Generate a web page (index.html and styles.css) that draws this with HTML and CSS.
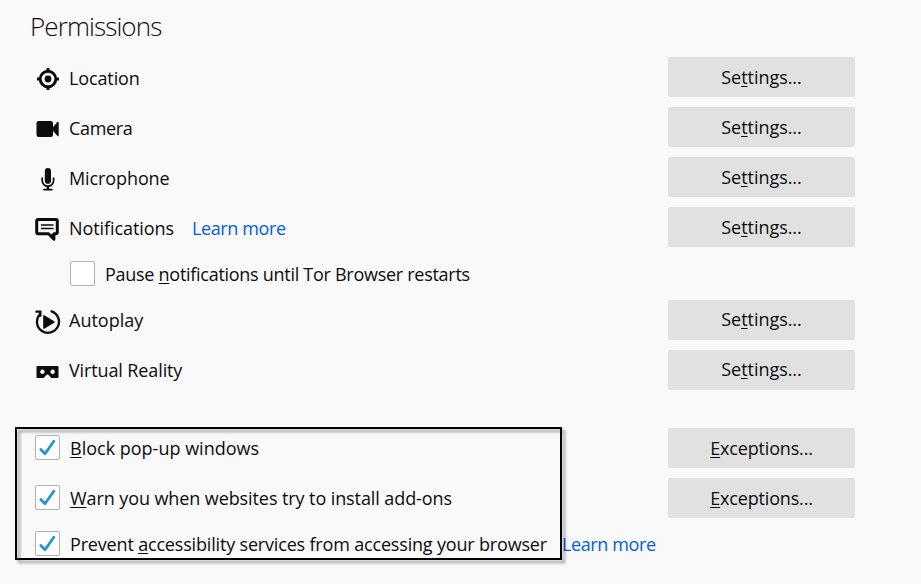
FILE: index.html
```html
<!DOCTYPE html>
<html lang="en">
<head>
<meta charset="utf-8">
<title>Permissions</title>
<link rel="stylesheet" href="styles.css">
</head>
<body>
<main class="permissions">
  <h1 class="title">Permissions</h1>

  <div class="row">
    <svg class="icon" viewBox="0 0 26 26"><g fill="none" stroke="#0c0c0d"><circle cx="13" cy="13" r="7.8" stroke-width="2.9"/><path d="M13 2v4M13 20v4M2 13h4M20 13h4" stroke-width="3"/></g><circle cx="13" cy="13" r="3.4"/></svg>
    <span class="label w-location">Location</span>
    <button class="button">Se<u>t</u>tings...</button>
  </div>
  <div class="row">
    <svg class="icon" viewBox="0 0 26 26"><rect x="1.5" y="5" width="16.5" height="16" rx="2.2"/><path d="M17 12.2 22.3 6.2Q23.7 5 23.7 7v12q0 2-1.4.8L17 13.8z"/></svg>
    <span class="label w-camera">Camera</span>
    <button class="button">Se<u>t</u>tings...</button>
  </div>
  <div class="row">
    <svg class="icon" viewBox="0 0 26 26"><rect x="9.8" y="2" width="6.2" height="15.8" rx="3.1"/><g fill="none" stroke="#0c0c0d" stroke-width="1.7"><path d="M7.2 11.5v3a5.7 5.7 0 0 0 11.4 0v-3M8.3 23.6h9.2"/><path d="M12.9 20v3" stroke-width="2.4"/></g></svg>
    <span class="label w-microphone">Microphone</span>
    <button class="button">Se<u>t</u>tings...</button>
  </div>
  <div class="row">
    <svg class="icon" viewBox="0 0 26 26"><path d="M4 3.4h17.4q1.6 0 1.6 1.6v11q0 1.8-1.6 1.8h-1.8v5.4l-5.3-5.4H4q-1.6 0-1.6-1.8V5Q2.4 3.4 4 3.4z" transform="translate(-.7)" fill="none" stroke="#0c0c0d" stroke-width="3" stroke-linejoin="round"/><path d="M16 18h3.5v6.2z"/><path d="M6.5 9h11.5M6.5 12.5h11.5" stroke="#0c0c0d" stroke-width="1.5" stroke-linecap="round"/></svg>
    <span class="label w-notifications">Notifications</span>
    <a class="link">Learn more</a>
    <button class="button">Se<u>t</u>tings...</button>
  </div>
  <div class="row row-slim row-indent row-raised">
    <span class="checkbox"></span>
    <span class="label w-pause">Pause <u>n</u>otifications until Tor Browser restarts</span>
  </div>
  <div class="row row-raised">
    <svg class="icon" viewBox="0 0 26 26"><g fill="none" stroke="#0c0c0d" stroke-width="2.3"><path d="M16.6 2.4A11 11 0 1 1 5 5.2" stroke-linecap="round"/><path d="M.5 2.6h4.8v5.2"/></g><path d="M8.2 7.2q0-1.7 1.5-.8l9.5 5.8q1.4.8 0 1.6l-9.5 5.8q-1.5.9-1.5-.8z"/></svg>
    <span class="label w-autoplay">Autoplay</span>
    <button class="button">Se<u>t</u>tings...</button>
  </div>
  <div class="row row-raised">
    <svg class="icon" viewBox="0 0 26 26"><path fill-rule="evenodd" d="M2.5 7h20q1 0 1 1v10q0 1-1 1h-6.4l-2.2-2.8q-1.4-1.6-2.8 0L8.9 19H2.5q-1 0-1-1V8q0-1 1-1zM7.4 10.6a2.2 2.2 0 1 0 .01 0zM17.6 10.6a2.2 2.2 0 1 0 .01 0z"/></svg>
    <span class="label w-vr">Virtual Reality</span>
    <button class="button">Se<u>t</u>tings...</button>
  </div>

  <section class="options">
    <div class="row row-option">
      <span class="checkbox"><svg viewBox="0 0 25 25"><path d="M5.8 14.5 10 18.8 18.8 6.2"/></svg></span>
      <span class="label w-block"><u>B</u>lock pop-up windows</span>
      <button class="button w-exceptions"><u>E</u>xceptions...</button>
    </div>
    <div class="row row-option">
      <span class="checkbox"><svg viewBox="0 0 25 25"><path d="M5.8 14.5 10 18.8 18.8 6.2"/></svg></span>
      <span class="label w-warn"><u>W</u>arn you when websites try to install add-ons</span>
      <button class="button w-exceptions"><u>E</u>xceptions...</button>
    </div>
    <div class="row row-slim row-option">
      <span class="checkbox"><svg viewBox="0 0 25 25"><path d="M5.8 14.5 10 18.8 18.8 6.2"/></svg></span>
      <span class="label w-prevent">Prevent <u>a</u>ccessibility services from accessing your browser</span>
      <a class="link link-last">Learn more</a>
    </div>
    <div class="highlight"></div>
  </section>
</main>
</body>
</html>
```
FILE: styles.css
```css
* { box-sizing: border-box; }

body {
  margin: 0;
  height: 584px;
  overflow: hidden;
  background: #f9f9fa;
  color: #0c0c0d;
  font: 18px/26px "Open Sans", "Noto Sans", sans-serif;
}

.permissions {
  width: 855px;
  padding: 7px 0 0 30px;
}

.title {
  margin: 0 0 12px;
  font-size: 26px;
  line-height: 38px;
  font-weight: 300;
  letter-spacing: -0.9px;
}

.row {
  display: flex;
  align-items: center;
  height: 40px;
  margin-bottom: 10px;
  padding-left: 4px;
  white-space: nowrap;
}

.row-slim { height: 33px; }
.row-indent { padding-left: 40px; }
.row-option { padding-left: 5px; }

.icon {
  flex: none;
  width: 26px;
  height: 26px;
  margin: 4px 8px 0 1px;
  fill: #0c0c0d;
}

.label { padding-top: 2px; }
.row-raised .label,
.row-option .label { padding-top: 0; }

.w-location { letter-spacing: -0.12px; }
.w-camera { letter-spacing: -0.35px; }
.w-microphone { letter-spacing: -0.1px; }
.w-notifications { letter-spacing: -0.08px; }
.w-pause { letter-spacing: -0.28px; }
.w-vr { letter-spacing: -0.12px; }
.w-warn { letter-spacing: -0.09px; }
.w-prevent { letter-spacing: -0.175px; }

.link {
  margin-left: 18px;
  padding-top: 2px;
  color: #0060df;
  letter-spacing: -0.38px;
}
.link-last { margin-left: 15px; }
.row-slim .label,
.row-slim .link { padding-top: 0; }
.row-option.row-slim .label,
.row-option.row-slim .link { padding-bottom: 1px; }

u {
  text-decoration-thickness: 1px;
  text-underline-offset: 2px;
  text-decoration-skip-ink: none;
}

.button {
  width: 187px;
  height: 40px;
  margin-left: auto;
  padding: 0;
  border: 0;
  border-radius: 2px;
  background: #e1e1e1;
  color: inherit;
  font: inherit;
  letter-spacing: -0.05px;
}
.row-raised .button { padding-bottom: 2px; }
.button.w-exceptions { letter-spacing: -0.17px; }

.checkbox {
  flex: none;
  width: 25px;
  height: 25px;
  margin-right: 10px;
  border: 1px solid #b1b1b1;
  border-radius: 2px;
  background: #fff;
}
.row-option .checkbox { margin-bottom: 2px; }
.checkbox svg {
  display: block;
  width: 25px;
  height: 25px;
  margin: -1px;
  fill: none;
  stroke: #2292d0;
  stroke-width: 2.7;
  stroke-linecap: round;
  stroke-linejoin: round;
}

.options {
  position: relative;
  margin-top: 38px;
}

.highlight {
  position: absolute;
  top: -1px;
  left: -15px;
  width: 547px;
  height: 133px;
  border: 2px solid #000;
  filter: drop-shadow(3px 3px 1.5px rgba(0, 0, 0, 0.4));
}
```
